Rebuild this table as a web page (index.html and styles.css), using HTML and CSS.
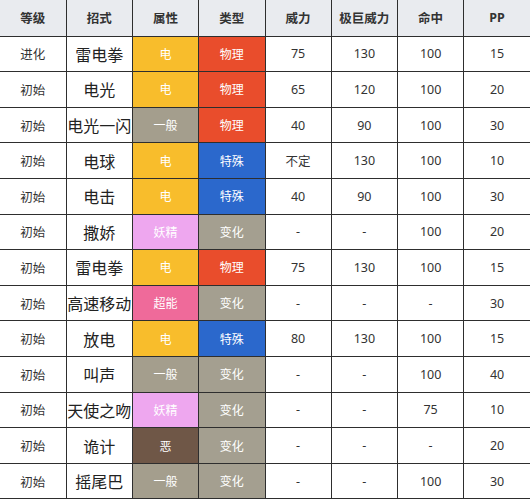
FILE: index.html
```html
<!DOCTYPE html>
<html lang="zh">
<head>
<meta charset="utf-8">
<link rel="stylesheet" href="styles.css">
</head>
<body>
<table class="moves">
<thead>
<tr><th>等级</th><th>招式</th><th>属性</th><th>类型</th><th>威力</th><th>极巨威力</th><th>命中</th><th>PP</th></tr>
</thead>
<tbody>
<tr><td>进化</td><td class="name">雷电拳</td><td class="t elec">电</td><td class="t phys">物理</td><td>75</td><td>130</td><td>100</td><td>15</td></tr>
<tr><td>初始</td><td class="name">电光</td><td class="t elec">电</td><td class="t phys">物理</td><td>65</td><td>120</td><td>100</td><td>20</td></tr>
<tr><td>初始</td><td class="name">电光一闪</td><td class="t norm">一般</td><td class="t phys">物理</td><td>40</td><td>90</td><td>100</td><td>30</td></tr>
<tr><td>初始</td><td class="name">电球</td><td class="t elec">电</td><td class="t spec">特殊</td><td>不定</td><td>130</td><td>100</td><td>10</td></tr>
<tr><td>初始</td><td class="name">电击</td><td class="t elec">电</td><td class="t spec">特殊</td><td>40</td><td>90</td><td>100</td><td>30</td></tr>
<tr><td>初始</td><td class="name">撒娇</td><td class="t fairy">妖精</td><td class="t stat">变化</td><td>-</td><td>-</td><td>100</td><td>20</td></tr>
<tr><td>初始</td><td class="name">雷电拳</td><td class="t elec">电</td><td class="t phys">物理</td><td>75</td><td>130</td><td>100</td><td>15</td></tr>
<tr><td>初始</td><td class="name">高速移动</td><td class="t psy">超能</td><td class="t stat">变化</td><td>-</td><td>-</td><td>-</td><td>30</td></tr>
<tr><td>初始</td><td class="name">放电</td><td class="t elec">电</td><td class="t spec">特殊</td><td>80</td><td>130</td><td>100</td><td>15</td></tr>
<tr><td>初始</td><td class="name">叫声</td><td class="t norm">一般</td><td class="t stat">变化</td><td>-</td><td>-</td><td>100</td><td>40</td></tr>
<tr><td>初始</td><td class="name">天使之吻</td><td class="t fairy">妖精</td><td class="t stat">变化</td><td>-</td><td>-</td><td>75</td><td>10</td></tr>
<tr><td>初始</td><td class="name">诡计</td><td class="t dark">恶</td><td class="t stat">变化</td><td>-</td><td>-</td><td>-</td><td>20</td></tr>
<tr><td>初始</td><td class="name">摇尾巴</td><td class="t norm">一般</td><td class="t stat">变化</td><td>-</td><td>-</td><td>100</td><td>30</td></tr>
</tbody>
</table>
</body>
</html>
```
FILE: styles.css
```css
html, body {
  margin: 0;
  padding: 0;
  background: #ffffff;
}
body {
  font-family: "Noto Sans", "Noto Sans CJK SC", sans-serif;
  color: #333333;
  overflow: hidden;
}
.moves {
  width: 530px;
  table-layout: fixed;
  border-collapse: collapse;
  border: none;
}
.moves th, .moves td {
  border: 1px solid #2e2e2e;
  text-align: center;
  vertical-align: middle;
  padding: 0;
  overflow: hidden;
  white-space: nowrap;
}
.moves th:first-child, .moves td:first-child {
  border-left: none;
}
.moves th:last-child, .moves td:last-child {
  border-right: none;
}
.moves th {
  border-top: none;
  background: #e9ebef;
  font-size: 12.5px;
  font-weight: bold;
  height: 35.5px;
  color: #333;
}
.moves td {
  font-size: 12.5px;
  height: 34.62px;
}
.moves td.name {
  font-size: 16px;
  color: #222;
}
.moves td.t {
  color: #ffffff;
  font-size: 12px;
}
.elec { background: #f8bd2c; }
.phys { background: #e94d2c; }
.spec { background: #2b68cc; }
.norm { background: #a49e8d; }
.stat { background: #a49f90; }
.fairy { background: #eea7ef; }
.psy { background: #ef6a9a; }
.dark { background: #6f5747; }
```
